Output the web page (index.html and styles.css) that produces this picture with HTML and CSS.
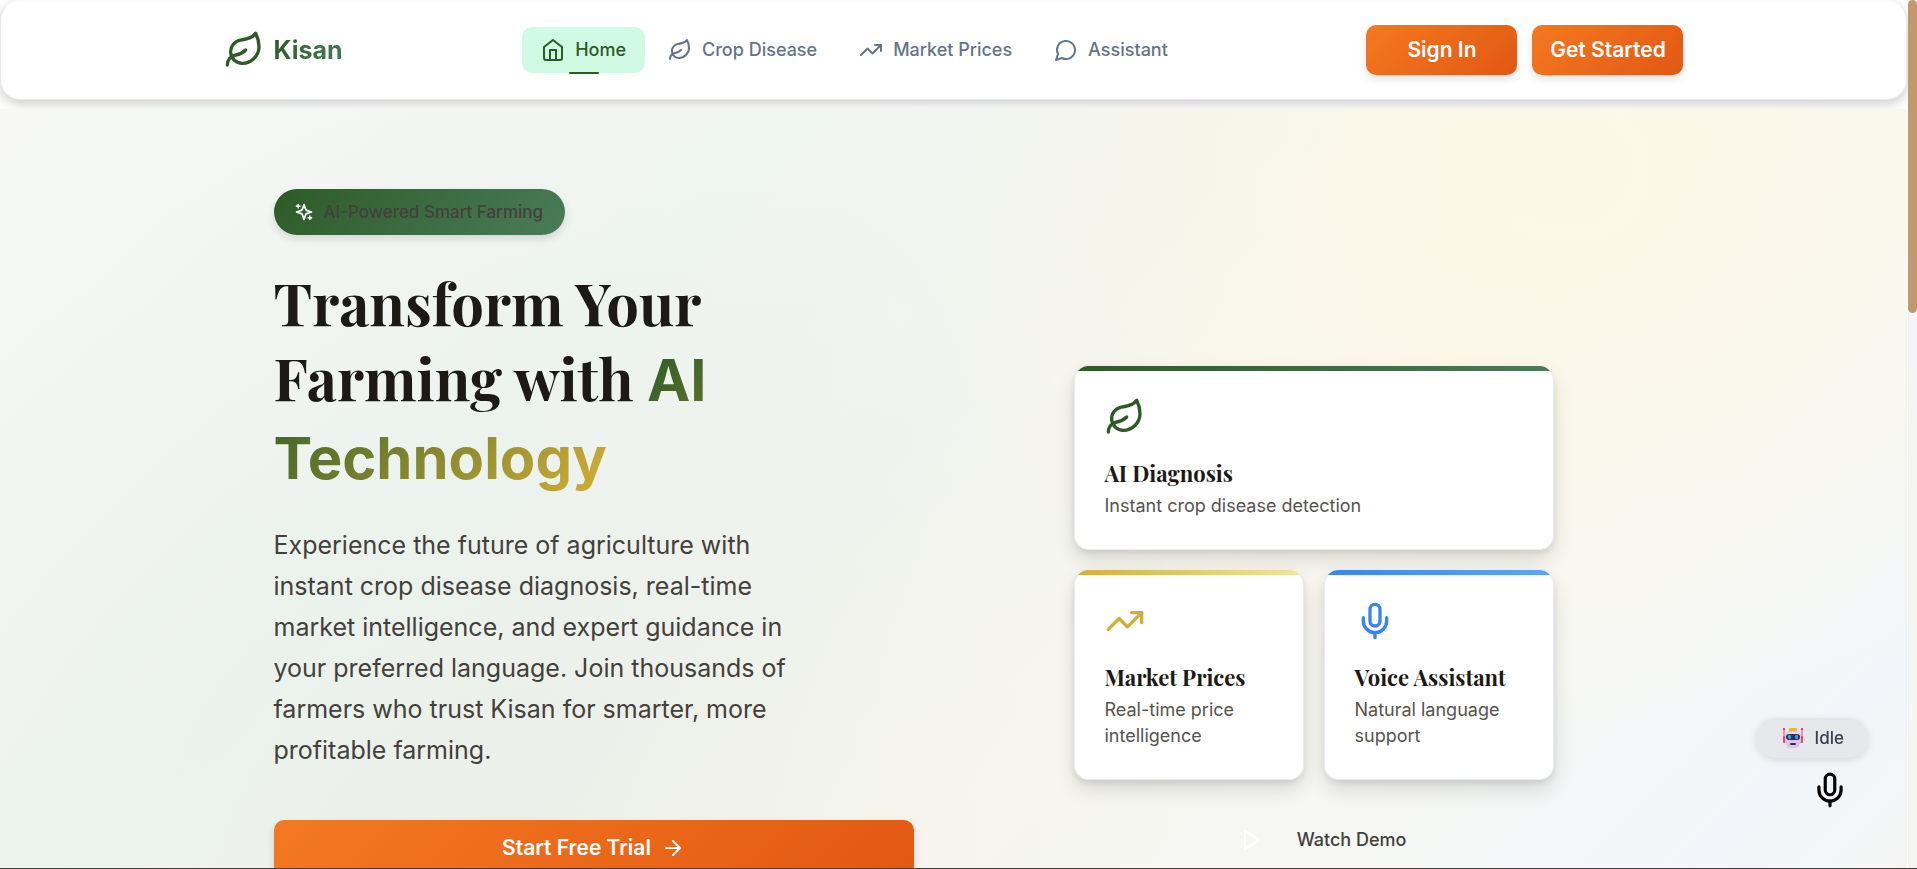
FILE: index.html
```
<!DOCTYPE html>
<html lang="en">
<head>
<meta charset="utf-8">
<meta name="viewport" content="width=device-width, initial-scale=1">
<title>Kisan</title>
<link rel="stylesheet" href="styles.css">
</head>
<body>
<svg class="sprite" aria-hidden="true">
  <symbol id="leaf" viewBox="0 0 24 24"><path d="M11 20A7 7 0 0 1 9.8 6.1C15.5 5 17 4.48 19 2c1 2 2 4.18 2 8 0 5.5-4.78 10-10 10Z"/><path d="M2 21c0-3 1.85-5.36 5.08-6C9.5 14.52 12 13 13 12"/></symbol>
  <symbol id="trend" viewBox="0 0 24 24"><path d="M22 7 13.5 15.500 8.500 10.500 2 17"/><path d="M16 7h6v6"/></symbol>
  <symbol id="mic" viewBox="0 0 24 24"><path d="M12 2a3 3 0 0 0-3 3v7a3 3 0 0 0 6 0V5a3 3 0 0 0-3-3Z"/><path d="M19 10v2a7 7 0 0 1-14 0v-2"/><path d="M12 19v3"/></symbol>
</svg>

<div class="page">
  <header class="header">
    <div class="header-inner">
      <a class="logo" href="#">
        <svg class="icon icon-lg"><use href="#leaf"/></svg>
        <span class="logo-text">Kisan</span>
      </a>
      <nav class="nav">
        <a class="nav-link active" href="#">
          <svg class="icon" viewBox="0 0 24 24"><path d="m3 9 9-7 9 7v11a2 2 0 0 1-2 2H5a2 2 0 0 1-2-2z"/><path d="M9 22V12h6v10"/></svg>
          Home
        </a>
        <a class="nav-link" href="#"><svg class="icon"><use href="#leaf"/></svg>Crop Disease</a>
        <a class="nav-link" href="#"><svg class="icon"><use href="#trend"/></svg>Market Prices</a>
        <a class="nav-link" href="#">
          <svg class="icon" viewBox="0 0 24 24"><path d="M7.900 20A9 9 0 1 0 4 16.100L2 22Z"/></svg>
          Assistant
        </a>
      </nav>
      <div class="auth">
        <button class="btn" type="button">Sign In</button>
        <button class="btn" type="button">Get Started</button>
      </div>
    </div>
  </header>

  <main class="hero">
    <div class="hero-grid">
      <section class="intro">
        <div class="badge">
          <svg class="icon icon-sm" viewBox="0 0 24 24"><path d="m12 3-1.912 5.813a2 2 0 0 1-1.275 1.275L3 12l5.813 1.912a2 2 0 0 1 1.275 1.275L12 21l1.912-5.813a2 2 0 0 1 1.275-1.275L21 12l-5.813-1.912a2 2 0 0 1-1.275-1.275L12 3Z"/><path d="M5 3v4M19 17v4M3 5h4M17 19h4"/></svg>
          <span>AI-Powered Smart Farming</span>
        </div>
        <h1>Transform Your Farming with <span class="accent">AI Technology</span></h1>
        <p class="lead">Experience the future of agriculture with instant crop disease diagnosis, real-time market intelligence, and expert guidance in your preferred language. Join thousands of farmers who trust Kisan for smarter, more profitable farming.</p>
      </section>
      <section class="cards">
        <article class="card card-wide green">
          <svg class="icon icon-lg"><use href="#leaf"/></svg>
          <h2>AI Diagnosis</h2>
          <p>Instant crop disease detection</p>
        </article>
        <article class="card gold">
          <svg class="icon icon-lg"><use href="#trend"/></svg>
          <h2>Market Prices</h2>
          <p>Real-time price intelligence</p>
        </article>
        <article class="card blue">
          <svg class="icon icon-lg"><use href="#mic"/></svg>
          <h2>Voice Assistant</h2>
          <p>Natural language support</p>
        </article>
      </section>
      <button class="btn btn-trial" type="button">Start Free Trial
        <svg class="icon" viewBox="0 0 24 24"><path d="M5 12h14M12 5l7 7-7 7"/></svg>
      </button>
      <button class="demo" type="button">
        <span class="demo-icon"><svg class="icon" viewBox="0 0 24 24"><path d="M6 3l14 9-14 9z"/></svg></span>
        Watch Demo
      </button>
    </div>
  </main>
</div>

<aside class="voice">
  <div class="status">
    <svg class="robot" viewBox="0 0 20 20" aria-hidden="true">
      <path d="M1 1v8M19 1v8" stroke="#f43f75" stroke-width="1"/>
      <circle cx="1" cy="1" r="1" fill="#e11d55"/><circle cx="19" cy="1" r="1" fill="#e11d55"/>
      <rect x="0" y="8" width="3" height="7" rx="1" fill="#f43f75"/><rect x="17" y="8" width="3" height="7" rx="1" fill="#f43f75"/>
      <rect x="6" y="0" width="8" height="4" rx="1" fill="#fbb034"/>
      <path d="M2 8Q2 3 10 3t8 5v4q0 3-1 4-1 4-4 4H7q-3 0-4-4-1-1-1-4z" fill="#d9c6ea"/>
      <path d="M3 8Q3 4 10 4t7 4z" fill="#e8e2f2"/>
      <rect x="3" y="6" width="14" height="6" rx="3" fill="#352c58"/>
      <rect x="5" y="7" width="3" height="4" rx="1" fill="#26a9e8"/><rect x="12" y="7" width="3" height="4" rx="1" fill="#26a9e8"/>
      <rect x="7" y="15" width="6" height="2" rx="1" fill="#352c58"/>
    </svg>
    <span>Idle</span>
  </div>
  <button class="mic" type="button" aria-label="Voice input"><svg class="icon"><use href="#mic"/></svg></button>
</aside>
<div class="scrollbar" aria-hidden="true"><div class="thumb"></div></div>
<div class="edge" aria-hidden="true"></div>
</body>
</html>
```

FILE: styles.css
```
* { box-sizing: border-box; }

body {
  margin: 0;
  height: 100vh;
  overflow: hidden;
  background: #fff;
  color: #44403c;
  font: 400 18px/26px Inter, "Liberation Sans", sans-serif;
}

h1, h2, p { margin: 0; }
a { color: inherit; text-decoration: none; }
button { font: inherit; color: inherit; border: 0; background: none; padding: 0; cursor: pointer; }

.sprite { position: absolute; width: 0; height: 0; }

.icon {
  flex: none;
  width: 24px;
  height: 24px;
  fill: none;
  stroke: currentColor;
  stroke-width: 2;
  stroke-linecap: round;
  stroke-linejoin: round;
}
.icon-lg { width: 40px; height: 40px; }
.icon-sm { width: 20px; height: 20px; }

.page {
  display: flex;
  flex-direction: column;
  height: 100vh;
  margin-right: 10px;
}

/* Header */
.header {
  margin-bottom: 9px;
  padding: 24px 0;
  background: #fff;
  border: 1px solid #e9e9eb;
  border-top-color: #fafafa;
  border-radius: 20px;
  box-shadow: 0 4px 12px rgba(0, 0, 0, 0.2);
}
.header-inner {
  display: flex;
  align-items: center;
  justify-content: space-between;
  max-width: 1500px;
  margin: 0 auto;
  padding: 0 20px;
}
.logo { display: flex; align-items: center; gap: 10px; color: #2d5a27; }
.logo-text {
  font-size: 25px;
  font-weight: 700;
  line-height: 32px;
  color: transparent;
  background: linear-gradient(135deg, #2d5a27, #4a7c59);
  background-clip: text;
}
.nav { display: flex; gap: 4px; }
.nav-link {
  display: flex;
  align-items: center;
  gap: 10px;
  padding: 10px 19px;
  border-radius: 10px;
  font-weight: 500;
  color: #64748b;
}
.nav-link.active { position: relative; background: #d1fae5; color: #2d5a27; }
.nav-link.active::after {
  content: "";
  position: absolute;
  bottom: -1px;
  left: 50%;
  width: 30px;
  height: 2px;
  margin-left: -15px;
  border-radius: 1px;
  background: #2d5a27;
}
.auth { display: flex; gap: 15px; }
.btn {
  display: flex;
  align-items: center;
  justify-content: center;
  gap: 10px;
  min-width: 151px;
  height: 50px;
  border-radius: 10px;
  background: linear-gradient(135deg, #f47920, #e25813);
  box-shadow: 0 4px 8px rgba(0, 0, 0, 0.12);
  color: #fff;
  font-size: 21px;
  font-weight: 600;
}

/* Hero */
.hero {
  position: relative;
  flex: 1;
  min-height: 0;
  overflow: hidden;
  padding: 80px 20px 0;
  background:
    radial-gradient(ellipse 36% 75% at 82% 8%, rgba(255, 248, 226, 0.75), transparent),
    radial-gradient(circle at 25% 100%, rgba(45, 90, 39, 0.03), transparent 50%),
    linear-gradient(135deg, #f7f8f6 0%, #eff5f1 30%, #f2f4ef 46%, #f8f7f0 62%, #f6f7f4 78%, #f2f6fa 92%, #f5f5f4 100%);
}
.hero-grid {
  display: grid;
  grid-template-columns: 1fr 1fr;
  column-gap: 80px;
  row-gap: 40px;
  max-width: 1360px;
  margin: 0 auto;
}
.intro { padding-bottom: 9px; }
.badge {
  display: inline-flex;
  align-items: center;
  gap: 10px;
  height: 46px;
  padding: 0 22px 0 20px;
  border-radius: 23px;
  background: linear-gradient(135deg, #2d5a27, #4a7c59);
  box-shadow: 0 4px 8px rgba(0, 0, 0, 0.12);
  font-size: 17px;
  font-weight: 500;
}
.badge .icon { color: #fff; }
h1 {
  max-width: 520px;
  margin-top: 30px;
  color: #1c1917;
  font: 700 58px/75px "Playfair Display", "Liberation Serif", serif;
}
.accent {
  font-family: Inter, "Liberation Sans", sans-serif;
  color: transparent;
  background: linear-gradient(135deg, #2d5a27, #d4af37);
  background-clip: text;
}
.lead {
  max-width: 530px;
  margin-top: 29px;
  font-size: 25px;
  line-height: 41px;
}

.cards {
  display: grid;
  grid-template-columns: 1fr 1fr;
  gap: 20px;
  align-self: end;
  justify-self: center;
  width: 100%;
  max-width: 480px;
}
.card {
  position: relative;
  overflow: hidden;
  padding: 31px;
  background: #fff;
  border-radius: 15px;
  box-shadow: inset 0 0 0 1px #e8ebf1, 0 10px 20px rgba(0, 0, 0, 0.12), 0 3px 6px rgba(0, 0, 0, 0.08);
}
.card::before { content: ""; position: absolute; inset: 0 0 auto; height: 5px; }
.card-wide { grid-column: 1 / -1; }
.card .icon { display: block; margin-bottom: 18px; }
.card h2 {
  margin-bottom: 2px;
  color: #1c1917;
  font: 700 22px/36px "Playfair Display", "Liberation Serif", serif;
}
.card p { color: #57534e; }
.green .icon { color: #2d5a27; }
.gold .icon { color: #d4af37; }
.blue .icon { color: #3b82f6; }
.green::before { background: linear-gradient(90deg, #2d5a27, #4a7c59); }
.gold::before { background: linear-gradient(90deg, #d4af37, #f4e4a1); }
.blue::before { background: linear-gradient(90deg, #3b82f6, #60a5fa); }

.btn-trial { height: 56px; }
.demo {
  display: flex;
  align-items: center;
  align-self: start;
  justify-self: center;
  gap: 16px;
  height: 40px;
  font-weight: 500;
}
.demo-icon { display: flex; justify-content: center; width: 60px; color: #fff; }

/* Floating voice assistant */
.voice {
  position: fixed;
  right: 49px;
  bottom: 60px;
  display: flex;
  flex-direction: column;
  align-items: flex-end;
  gap: 13px;
}
.status {
  display: flex;
  align-items: center;
  gap: 12px;
  height: 40px;
  padding: 0 24px 0 27px;
  border-radius: 20px;
  background: #e5e7eb;
  box-shadow: 0 2px 8px rgba(0, 0, 0, 0.12);
  color: #374151;
  font-size: 17px;
  font-weight: 500;
}
.robot { width: 20px; height: 20px; }
.mic { margin-right: 19px; color: #000; }
.mic .icon { display: block; width: 38px; height: 38px; }

/* Page scrollbar and window edge */
.scrollbar { position: fixed; inset: 0 0 0 auto; width: 9px; background: #f5f5f4; }
.thumb { height: 36%; border-radius: 5px; background: #c19a6b; }
.edge { position: fixed; inset: auto 0 0; height: 1px; background: #44403c; }
```
